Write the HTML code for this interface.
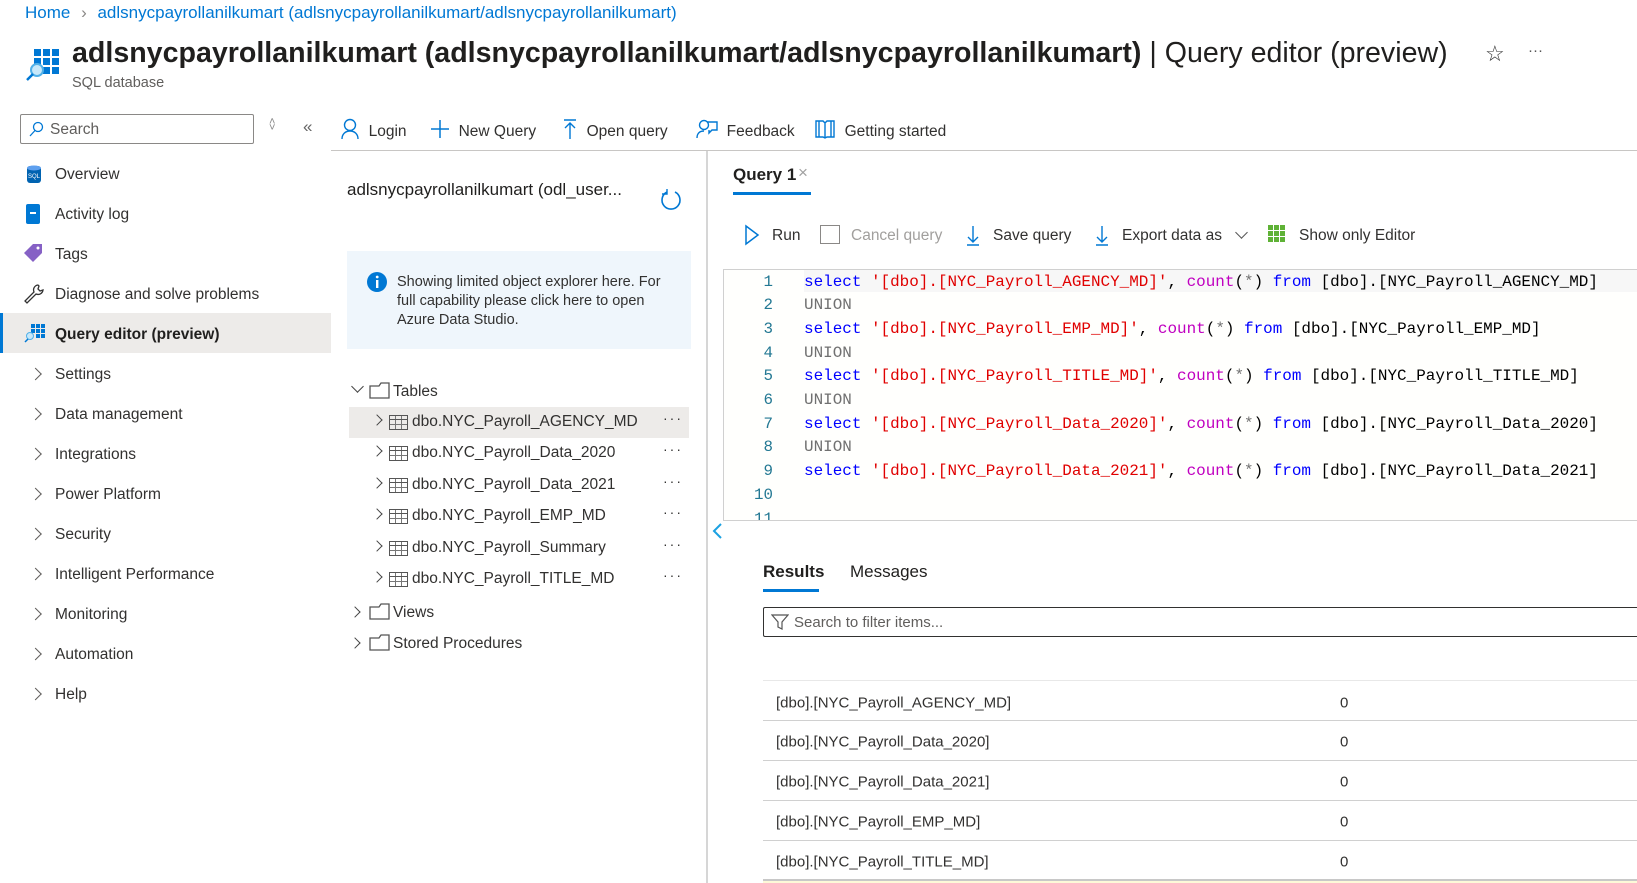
<!DOCTYPE html>
<html><head><meta charset="utf-8"><style>
*{margin:0;padding:0;box-sizing:border-box}
body{width:1637px;height:883px;overflow:hidden;background:#fff;font-family:"Liberation Sans",sans-serif;color:#323130;position:relative}
.a{position:absolute;white-space:nowrap}
.t16{font-size:15.5px}
.nav{position:absolute;left:55px;font-size:15.5px;transform:translateY(-50%)}
.chev{position:absolute;left:31px;width:9px;height:9px;border-right:1.4px solid #605e5c;border-top:1.4px solid #605e5c;transform:translateY(-50%) rotate(45deg)}
.code{position:absolute;left:804px;font-family:"Liberation Mono",monospace;font-size:15.95px;white-space:pre;transform:translateY(-50%);color:#000}
.ln{position:absolute;width:40px;left:733px;text-align:right;font-family:"Liberation Mono",monospace;font-size:15.8px;color:#237893;transform:translateY(-50%)}
.k{color:#0000ff}.s{color:#e00000}.f{color:#c000c0}.u{color:#707070}
.row{position:absolute;left:349px;width:340px;height:31px;font-size:15.5px}
.row .c{position:absolute;left:24px;top:9px;width:8px;height:8px;border-right:1.3px solid #444;border-top:1.3px solid #444;transform:rotate(45deg)}
.row .g{position:absolute;left:40px;top:8px;width:19px;height:15px;border:1.3px solid #555;background:linear-gradient(#555,#555) 0 3px/100% 1.3px no-repeat,repeating-linear-gradient(90deg,transparent 0 5px,#777 5px 6px),repeating-linear-gradient(0deg,transparent 0 4px,#777 4px 5px)}
.row .n{position:absolute;left:63px;top:6px}
.row .d{position:absolute;right:6px;top:3px;letter-spacing:2px;font-size:14px}
.res{position:absolute;left:776px;font-size:15px;transform:translateY(-50%)}
.z{position:absolute;left:1340px;font-size:15px;transform:translateY(-50%)}
.hl{position:absolute;left:763px;right:0;height:1px;background:#d0d0d0}
</style></head><body>
<div class="a" style="left:25px;top:3px;font-size:17px;color:#0078d4">Home <span style="color:#8a8886;margin:0 6px">&#x203A;</span> adlsnycpayrollanilkumart (adlsnycpayrollanilkumart/adlsnycpayrollanilkumart)</div>
<svg class="a" style="left:25px;top:46px" width="36" height="36" viewBox="0 0 36 36">
<g fill="#0078d4"><rect x="9" y="3" width="7" height="7"/><rect x="18" y="3" width="7" height="7"/><rect x="27" y="3" width="7" height="7"/><rect x="9" y="12" width="7" height="7"/><rect x="18" y="12" width="7" height="7"/><rect x="27" y="12" width="7" height="7"/><rect x="18" y="21" width="7" height="7"/><rect x="27" y="21" width="7" height="7"/></g>
<circle cx="12" cy="24" r="6" fill="#c7e8fa" stroke="#50b0e8" stroke-width="2"/><line x1="8" y1="28" x2="2" y2="34" stroke="#0078d4" stroke-width="2.5"/></svg>
<div class="a" style="left:72px;top:37px;font-size:28.6px;color:#201f1e"><b style="font-weight:600">adlsnycpayrollanilkumart (adlsnycpayrollanilkumart/adlsnycpayrollanilkumart)</b> | Query editor (preview)</div>
<div class="a" style="left:1485px;top:41px;font-size:22px;color:#333">&#9734;</div>
<div class="a" style="left:1528px;top:42px;font-size:15px;color:#555">&middot;&middot;&middot;</div>
<div class="a" style="left:72px;top:75px;font-size:14.5px;color:#605e5c">SQL database</div>

<div class="a" style="left:20px;top:114px;width:234px;height:30px;border:1px solid #8a8886;border-radius:2px"></div>
<svg class="a" style="left:28px;top:121px" width="16" height="16"><circle cx="10" cy="6" r="4.5" fill="none" stroke="#0078d4" stroke-width="1.3"/><line x1="7" y1="9.5" x2="2" y2="15" stroke="#0078d4" stroke-width="1.3"/></svg>
<div class="a" style="left:50px;top:121px;font-size:15.5px;color:#605e5c">Search</div>
<div class="a" style="left:269px;top:119px;font-size:11px;color:#888;line-height:6px">&#x2C4;<br>&#x2C5;</div>
<div class="a" style="left:303px;top:117px;font-size:17px;color:#666">&laquo;</div>

<div class="a" style="left:340px;top:118px;font-size:15.5px;color:#323130">
<svg style="vertical-align:-4px" width="20" height="22"><circle cx="10" cy="7" r="5.5" fill="none" stroke="#0078d4" stroke-width="1.4"/><path d="M2 21c0-5 3.5-8 8-8s8 3 8 8" fill="none" stroke="#0078d4" stroke-width="1.4"/></svg> &nbsp;Login</div>
<div class="a" style="left:430px;top:118px;font-size:15.5px"><svg style="vertical-align:-4px" width="20" height="22"><path d="M10 2v18M1 11h18" stroke="#0078d4" stroke-width="1.5"/></svg> &nbsp;New Query</div>
<div class="a" style="left:562px;top:118px;font-size:15.5px"><svg style="vertical-align:-4px" width="16" height="22"><path d="M2 2h12M8 5v16M3 10l5-5 5 5" fill="none" stroke="#0078d4" stroke-width="1.4"/></svg> &nbsp;Open query</div>
<div class="a" style="left:696px;top:118px;font-size:15.5px"><svg style="vertical-align:-4px" width="22" height="22"><circle cx="8" cy="7" r="4.5" fill="none" stroke="#0078d4" stroke-width="1.4"/><path d="M1 20c0-5 3-7 7-7M11 4h10v8h-5l-3 3v-3" fill="none" stroke="#0078d4" stroke-width="1.4"/></svg> &nbsp;Feedback</div>
<div class="a" style="left:814px;top:118px;font-size:15.5px"><svg style="vertical-align:-4px" width="22" height="22"><path d="M2 3h7l2 2 2-2h7v16h-7l-2 1-2-1H2zM11 5v15M5 3v16M17 3v16" fill="none" stroke="#0078d4" stroke-width="1.4"/></svg> &nbsp;Getting started</div>
<div class="a" style="left:331px;top:150px;right:0;height:1px;background:#c8c6c4"></div>

<div class="a" style="left:0;top:313px;width:331px;height:40px;background:#edebe9"></div>
<div class="a" style="left:0;top:313px;width:3px;height:40px;background:#0078d4"></div>
<svg class="a" style="left:26px;top:164px" width="16" height="20"><rect x="1" y="2" width="14" height="17" rx="3" fill="#0063b1"/><ellipse cx="8" cy="4" rx="7" ry="2.5" fill="#5ea0ef"/><text x="2" y="14" font-size="6" fill="#fff" font-family="Liberation Sans">SQL</text></svg>
<div class="nav" style="top:175px">Overview</div>
<svg class="a" style="left:26px;top:204px" width="14" height="20"><rect x="0" y="0" width="14" height="20" rx="2" fill="#0078d4"/><rect x="4" y="8" width="6" height="2" fill="#fff"/></svg>
<div class="nav" style="top:215px">Activity log</div>
<svg class="a" style="left:24px;top:243px" width="20" height="20"><path d="M9 1h9v9l-9 9-9-9z" fill="#8661c5"/><circle cx="14" cy="5" r="1.5" fill="#fff"/></svg>
<div class="nav" style="top:255px">Tags</div>
<svg class="a" style="left:23px;top:283px" width="22" height="22"><path d="M15 2a5 5 0 0 0-4 7L2 18l2 2 9-9a5 5 0 0 0 7-4l-3 1-2-2 1-3z" fill="none" stroke="#333" stroke-width="1.3"/></svg>
<div class="nav" style="top:295px">Diagnose and solve problems</div>
<svg class="a" style="left:24px;top:323px" width="22" height="20"><g fill="#0078d4"><rect x="7" y="1" width="4" height="4"/><rect x="12" y="1" width="4" height="4"/><rect x="17" y="1" width="4" height="4"/><rect x="7" y="6" width="4" height="4"/><rect x="12" y="6" width="4" height="4"/><rect x="17" y="6" width="4" height="4"/><rect x="12" y="11" width="4" height="4"/><rect x="17" y="11" width="4" height="4"/></g><circle cx="6" cy="13" r="3.5" fill="#c7e8fa" stroke="#50b0e8"/><line x1="4" y1="16" x2="1" y2="19" stroke="#0078d4" stroke-width="1.5"/></svg>
<div class="nav" style="top:335px;font-weight:600;color:#201f1e">Query editor (preview)</div>
<div class="chev" style="top:374px"></div><div class="nav" style="top:375px">Settings</div>
<div class="chev" style="top:414px"></div><div class="nav" style="top:415px">Data management</div>
<div class="chev" style="top:454px"></div><div class="nav" style="top:455px">Integrations</div>
<div class="chev" style="top:494px"></div><div class="nav" style="top:495px">Power Platform</div>
<div class="chev" style="top:534px"></div><div class="nav" style="top:535px">Security</div>
<div class="chev" style="top:574px"></div><div class="nav" style="top:575px">Intelligent Performance</div>
<div class="chev" style="top:614px"></div><div class="nav" style="top:615px">Monitoring</div>
<div class="chev" style="top:654px"></div><div class="nav" style="top:655px">Automation</div>
<div class="chev" style="top:694px"></div><div class="nav" style="top:695px">Help</div>

<div class="a" style="left:347px;top:180px;font-size:17px;color:#201f1e">adlsnycpayrollanilkumart (odl_user...</div>
<svg class="a" style="left:659px;top:188px" width="24" height="24"><path d="M8 4A9 9 0 1 0 16 4" fill="none" stroke="#0078d4" stroke-width="1.6"/><path d="M8 1v5H3" fill="none" stroke="#0078d4" stroke-width="1.4"/></svg>
<div class="a" style="left:347px;top:251px;width:344px;height:98px;background:#eff6fc"></div>
<svg class="a" style="left:367px;top:272px" width="20" height="20"><circle cx="10" cy="10" r="10" fill="#0078d4"/><rect x="9" y="8" width="2.4" height="8" fill="#fff"/><circle cx="10.2" cy="5" r="1.4" fill="#fff"/></svg>
<div class="a" style="left:397px;top:273px;font-size:14.5px;line-height:19px;color:#323130;white-space:normal;width:282px">Showing limited object explorer here. For full capability please click here to open Azure Data Studio.</div>

<div class="a" style="left:353px;top:382px;width:9px;height:9px;border-right:1.3px solid #444;border-bottom:1.3px solid #444;transform:rotate(45deg)"></div>
<svg class="a" style="left:369px;top:382px" width="22" height="17"><path d="M1 4h9l2-3h8v15H1z" fill="none" stroke="#555" stroke-width="1.3"/></svg>
<div class="a" style="left:393px;top:383px;font-size:15.5px">Tables</div>
<div class="row" style="top:407px;background:#edebe9"><div class="c"></div><div class="g"></div><div class="n">dbo.NYC_Payroll_AGENCY_MD</div><div class="d">&middot;&middot;&middot;</div></div>
<div class="row" style="top:438px"><div class="c"></div><div class="g"></div><div class="n">dbo.NYC_Payroll_Data_2020</div><div class="d">&middot;&middot;&middot;</div></div>
<div class="row" style="top:470px"><div class="c"></div><div class="g"></div><div class="n">dbo.NYC_Payroll_Data_2021</div><div class="d">&middot;&middot;&middot;</div></div>
<div class="row" style="top:501px"><div class="c"></div><div class="g"></div><div class="n">dbo.NYC_Payroll_EMP_MD</div><div class="d">&middot;&middot;&middot;</div></div>
<div class="row" style="top:533px"><div class="c"></div><div class="g"></div><div class="n">dbo.NYC_Payroll_Summary</div><div class="d">&middot;&middot;&middot;</div></div>
<div class="row" style="top:564px"><div class="c"></div><div class="g"></div><div class="n">dbo.NYC_Payroll_TITLE_MD</div><div class="d">&middot;&middot;&middot;</div></div>
<div class="a" style="left:351px;top:608px;width:8px;height:8px;border-right:1.3px solid #444;border-top:1.3px solid #444;transform:rotate(45deg)"></div>
<svg class="a" style="left:369px;top:603px" width="22" height="17"><path d="M1 4h9l2-3h8v15H1z" fill="none" stroke="#555" stroke-width="1.3"/></svg>
<div class="a" style="left:393px;top:604px;font-size:15.5px">Views</div>
<div class="a" style="left:351px;top:639px;width:8px;height:8px;border-right:1.3px solid #444;border-top:1.3px solid #444;transform:rotate(45deg)"></div>
<svg class="a" style="left:369px;top:634px" width="22" height="17"><path d="M1 4h9l2-3h8v15H1z" fill="none" stroke="#555" stroke-width="1.3"/></svg>
<div class="a" style="left:393px;top:635px;font-size:15.5px">Stored Procedures</div>

<div class="a" style="left:706px;top:151px;width:2px;height:732px;background:#d6d6d6"></div>

<div class="a" style="left:733px;top:165px;font-size:17px;font-weight:600;color:#201f1e">Query 1</div>
<div class="a" style="left:798px;top:163px;font-size:17px;color:#a0a0a0">&times;</div>
<div class="a" style="left:733px;top:192px;width:78px;height:3px;background:#0078d4"></div>

<svg class="a" style="left:744px;top:224px" width="16" height="22"><path d="M2 2l12 9-12 9z" fill="none" stroke="#0078d4" stroke-width="1.5"/></svg>
<div class="a t16" style="left:772px;top:227px">Run</div>
<div class="a" style="left:820px;top:225px;width:20px;height:19px;border:1.5px solid #8a8886"></div>
<div class="a t16" style="left:851px;top:227px;color:#a19f9d">Cancel query</div>
<svg class="a" style="left:965px;top:224px" width="16" height="22"><path d="M8 2v16M3 13l5 5 5-5M2 21h12" fill="none" stroke="#0078d4" stroke-width="1.4"/></svg>
<div class="a t16" style="left:993px;top:227px">Save query</div>
<svg class="a" style="left:1094px;top:224px" width="16" height="22"><path d="M8 2v16M3 13l5 5 5-5M2 21h12" fill="none" stroke="#0078d4" stroke-width="1.4"/></svg>
<div class="a t16" style="left:1122px;top:227px">Export data as</div>
<div class="a" style="left:1237px;top:228px;width:9px;height:9px;border-right:1.3px solid #555;border-bottom:1.3px solid #555;transform:rotate(45deg)"></div>
<svg class="a" style="left:1268px;top:225px" width="18" height="18"><g fill="#5fb236"><rect x="0" y="0" width="5" height="5"/><rect x="6" y="0" width="5" height="5"/><rect x="12" y="0" width="5" height="5"/><rect x="0" y="6" width="5" height="5"/><rect x="6" y="6" width="5" height="5"/><rect x="12" y="6" width="5" height="5"/><rect x="0" y="12" width="5" height="5"/><rect x="6" y="12" width="5" height="5"/><rect x="12" y="12" width="5" height="5"/></g></svg>
<div class="a t16" style="left:1299px;top:227px">Show only Editor</div>

<div class="a" style="left:723px;top:269px;right:0;height:252px;border-left:1px solid #d0d0d0;border-top:1px solid #d0d0d0;border-bottom:1px solid #d0d0d0;background:#fffffd"></div>
<div class="a" style="left:804px;top:270px;right:0;height:22px;background:#f7f7f7"></div>
<div class="ln" style="top:282px">1</div><div class="code" style="top:282px"><span class="k">select</span> <span class="s">'[dbo].[NYC_Payroll_AGENCY_MD]'</span>, <span class="f">count</span>(<span class="u">*</span>) <span class="k">from</span> [dbo].[NYC_Payroll_AGENCY_MD]</div>
<div class="ln" style="top:305px">2</div><div class="code" style="top:305px;color:#707070">UNION</div>
<div class="ln" style="top:329px">3</div><div class="code" style="top:329px"><span class="k">select</span> <span class="s">'[dbo].[NYC_Payroll_EMP_MD]'</span>, <span class="f">count</span>(<span class="u">*</span>) <span class="k">from</span> [dbo].[NYC_Payroll_EMP_MD]</div>
<div class="ln" style="top:353px">4</div><div class="code" style="top:353px;color:#707070">UNION</div>
<div class="ln" style="top:376px">5</div><div class="code" style="top:376px"><span class="k">select</span> <span class="s">'[dbo].[NYC_Payroll_TITLE_MD]'</span>, <span class="f">count</span>(<span class="u">*</span>) <span class="k">from</span> [dbo].[NYC_Payroll_TITLE_MD]</div>
<div class="ln" style="top:400px">6</div><div class="code" style="top:400px;color:#707070">UNION</div>
<div class="ln" style="top:424px">7</div><div class="code" style="top:424px"><span class="k">select</span> <span class="s">'[dbo].[NYC_Payroll_Data_2020]'</span>, <span class="f">count</span>(<span class="u">*</span>) <span class="k">from</span> [dbo].[NYC_Payroll_Data_2020]</div>
<div class="ln" style="top:447px">8</div><div class="code" style="top:447px;color:#707070">UNION</div>
<div class="ln" style="top:471px">9</div><div class="code" style="top:471px"><span class="k">select</span> <span class="s">'[dbo].[NYC_Payroll_Data_2021]'</span>, <span class="f">count</span>(<span class="u">*</span>) <span class="k">from</span> [dbo].[NYC_Payroll_Data_2021]</div>
<div class="ln" style="top:495px">10</div>
<div class="a" style="left:733px;top:510px;width:40px;height:10px;overflow:hidden"><div class="a" style="right:0;top:0;font-family:'Liberation Mono',monospace;font-size:15.8px;color:#237893">11</div></div>

<svg class="a" style="left:710px;top:522px" width="14" height="18"><path d="M11 2l-7 7 7 7" fill="none" stroke="#1ba1e2" stroke-width="2"/></svg>

<div class="a" style="left:763px;top:562px;font-size:17px;font-weight:600;color:#201f1e">Results</div>
<div class="a" style="left:763px;top:589px;width:56px;height:3px;background:#0078d4"></div>
<div class="a" style="left:850px;top:562px;font-size:17px;color:#201f1e">Messages</div>
<div class="a" style="left:763px;top:607px;right:0;height:30px;border:1px solid #323130;border-right:none;border-radius:2px 0 0 2px"></div>
<svg class="a" style="left:771px;top:613px" width="18" height="18"><path d="M1 2h16l-6 7v7l-4-2V9z" fill="none" stroke="#555" stroke-width="1.2"/></svg>
<div class="a" style="left:794px;top:614px;font-size:15px;color:#605e5c">Search to filter items...</div>

<div class="hl" style="top:680px;background:#e8e8e8"></div>
<div class="res" style="top:703px">[dbo].[NYC_Payroll_AGENCY_MD]</div><div class="z" style="top:703px">0</div>
<div class="hl" style="top:720px"></div>
<div class="res" style="top:742px">[dbo].[NYC_Payroll_Data_2020]</div><div class="z" style="top:742px">0</div>
<div class="hl" style="top:760px"></div>
<div class="res" style="top:782px">[dbo].[NYC_Payroll_Data_2021]</div><div class="z" style="top:782px">0</div>
<div class="hl" style="top:800px"></div>
<div class="res" style="top:822px">[dbo].[NYC_Payroll_EMP_MD]</div><div class="z" style="top:822px">0</div>
<div class="hl" style="top:840px"></div>
<div class="res" style="top:862px">[dbo].[NYC_Payroll_TITLE_MD]</div><div class="z" style="top:862px">0</div>
<div class="hl" style="top:879px;height:2px;background:#c8c8c8"></div>
<div class="a" style="left:763px;right:0;top:881px;height:2px;background:#fdf9d8"></div>
</body></html>
